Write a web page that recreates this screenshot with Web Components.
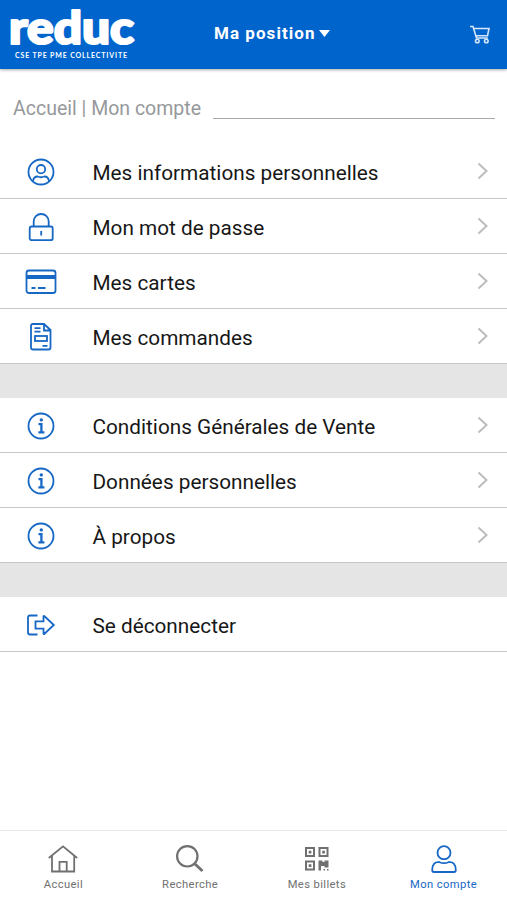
<!DOCTYPE html>
<html lang="fr"><head><meta charset="utf-8"><title>Mon compte</title>
<style>html,body{margin:0;height:100%;background:#fff}body{font-family:Roboto,sans-serif}</style></head>
<body><account-page></account-page>
<script>
const define=(name,html)=>customElements.define(name,class extends HTMLElement{
  connectedCallback(){if(!this.shadowRoot)this.attachShadow({mode:'open'}).innerHTML=typeof html==='function'?html(this):html}
});
const icons={
user:'<circle cx="16" cy="16" r="12.5"/><circle cx="16" cy="13.2" r="4.2"/><path d="M8 25.500Q8.500 20.500 12.500 20.500Q16 22 19.500 20.500Q23.500 20.500 24 25.500"/>',
lock:'<rect x="4.700" y="15.500" width="23" height="13.700" rx="2"/><path d="M8.700 15.500V10.500a7.500 7.500 0 0 1 15 0v5M16.200 20v4.500"/>',
card:'<rect x="1.500" y="4.500" width="29" height="22.500" rx="2.500"/><path d="M2 11h28" stroke-width="4"/><path d="M6.500 22h4M13 22h7.500"/>',
order:'<path d="M8 3h11l6.500 6v17.500q0 2-2 2H8q-2 0-2-2V5q0-2 2-2ZM19 3v6.500h6.500"/><path d="M9.500 7.200h6M9.500 10.600h6M17.500 24.800h5"/><rect x="10" y="15" width="12" height="5"/>',
info:'<circle cx="16" cy="16" r="12.500"/><circle cx="16.300" cy="9.900" r="1.700" fill="currentColor" stroke="none"/><path d="M13.500 14.200h2.900v8M13.400 22.300h6" stroke-width="2.300"/>',
exit:'<path d="M12.500 6.500H5q-2 0-2 2v15q0 2 2 2h7.500"/><path d="M10.500 12.300h8V7.500q0-1 1-.2l9.300 8.700-9.300 8.700q-1 .8-1-.2v-4.800h-8Z"/>',
home:'<path d="M1.800 15 16 3.300 30.200 15M5 12.700v15.800h22.200V12.700M12.500 28.500V18.800h7.200v9.700"/>',
search:'<circle cx="13.300" cy="13.300" r="10.200" stroke-width="2.200"/><path d="m20.700 20.700 7.800 7.300" stroke-width="2.800"/>',
qr:'<path d="M5 5h8v8H5zM18.500 5h8v8h-8zM5 18.500h8v8H5z" stroke-width="2"/><path d="M7.700 7.700h2.700v2.700H7.700zM21.200 7.700h2.700v2.700h-2.700zM7.700 21.200h2.700v2.700H7.700zM17.500 17.500h4v1.500h2v-1.500h4v7h-4V23H20v4.500h-2.500zM22.500 26h1.500v1.500h-1.500zM26 26h1.500v1.500H26z" fill="currentColor" stroke="none"/>',
person:'<circle cx="16" cy="9.700" r="6.500"/><path d="M11.500 19.200Q16 21.200 20.500 19.200Q27.500 18 27.800 27q0 2-1.800 2H6q-1.800 0-1.800-2Q4.500 18 11.500 19.200Z"/>'
};
define('line-icon',e=>`<style>:host{display:block;width:32px;height:32px;flex:none}svg{display:block;width:100%;height:100%}</style><svg viewBox="0 0 32 32" fill="none" stroke="currentColor" stroke-width="1.800">${icons[e.getAttribute('name')]}</svg>`);
define('brand-logo',`<style>:host{display:flex;flex-direction:column;width:130px;height:61px;color:#fff}svg{display:block;flex:none;overflow:visible}.name{font:900 45px Lato,sans-serif}.sub{font:700 7px Lato,sans-serif}</style>
<svg width="130" height="49"><text class="name" fill="#fff" stroke="#fff" stroke-width="2.200" stroke-linejoin="round" x="0" y="43.800" textLength="125" lengthAdjust="spacingAndGlyphs">reduc</text></svg>
<svg width="130" height="10"><text class="sub" fill="#fff" x="6" y="8.500" textLength="112">CSE TPE PME COLLECTIVITE</text></svg>`);
define('app-header',`<style>:host{display:grid;grid-template-columns:205px auto 1fr;height:69px;box-sizing:border-box;padding:0 16px 0 9px;background:#0064cd;color:#fff;box-shadow:0 1px 3px #0005;flex:none;position:relative}
.place{display:flex;align-items:center;gap:3px;height:50px;margin-top:8px;font:700 17px/20px Roboto,sans-serif;letter-spacing:1.050px}
.place svg{margin-top:1px}.cart{justify-self:end;margin-top:23px;color:#d5e6fa}</style>
<brand-logo></brand-logo><div class="place"><span>Ma position</span><svg width="11" height="7"><path d="M0 0h11L5.500 7z" fill="#fff"/></svg></div>
<svg class="cart" width="22" height="22" fill="none" stroke="currentColor" stroke-width="1.600"><path d="M1 3.500h3l3.500 11.500h11.300M5 5.500h15l-1.500 7.300H7"/><circle cx="8.300" cy="18" r="1.800"/><circle cx="17.300" cy="18" r="1.800"/></svg>`);
define('bread-crumb',`<style>:host{display:flex;height:74.500px;box-sizing:border-box;padding:0 12px 0 13px;gap:12px;color:#96989b;font:400 19.500px/24px Roboto,sans-serif;flex:none}span{margin-top:28px;white-space:nowrap}i{flex:1;height:49px;border-bottom:1px solid #a7a9ad}</style><span><slot></slot></span><i></i>`);
define('menu-row',e=>`<style>:host{display:flex;align-items:center;height:55px;box-sizing:border-box;border-bottom:1px solid #c8c8c8;padding:2px 18px 0 24.500px;color:#171717;font:400 20.750px/26px Roboto,sans-serif;flex:none}line-icon{color:#1768c5;margin-right:36px}span{flex:1;white-space:nowrap;padding-top:2px}svg{display:block;margin-top:-1px}</style><line-icon name="${e.getAttribute('icon')}"></line-icon><span><slot></slot></span>${e.hasAttribute('plain')?'':'<svg width="13" height="18" fill="none" stroke="#bdbdbd" stroke-width="2"><path d="m2.500 1.500 8 7.500-8 7.500"/></svg>'}`);
define('menu-group',`<style>:host{display:flex;flex-direction:column}:host([separated])::before{content:"";height:34.300px;background:#e5e5e5}</style><slot></slot>`);
define('tab-item',e=>`<style>:host{flex:1;display:flex;flex-direction:column;align-items:center;padding-top:12px;color:#707070;font:400 11.200px/14px Roboto,sans-serif;letter-spacing:.4px}:host([active]){color:#1768c5}span{margin-top:3px}</style><line-icon name="${e.getAttribute('icon')}"></line-icon><span><slot></slot></span>`);
define('tab-bar',`<style>:host{display:flex;height:70px;box-sizing:border-box;border-top:1px solid #e8e8e8;margin-top:auto;flex:none}</style><slot></slot>`);
define('account-page',`<style>:host{display:flex;flex-direction:column;height:900px;overflow:hidden;background:#fff}</style>
<app-header></app-header><bread-crumb>Accueil | Mon compte</bread-crumb>
<menu-group><menu-row icon="user">Mes informations personnelles</menu-row><menu-row icon="lock">Mon mot de passe</menu-row><menu-row icon="card">Mes cartes</menu-row><menu-row icon="order">Mes commandes</menu-row></menu-group>
<menu-group separated><menu-row icon="info">Conditions Générales de Vente</menu-row><menu-row icon="info">Données personnelles</menu-row><menu-row icon="info">À propos</menu-row></menu-group>
<menu-group separated><menu-row icon="exit" plain>Se déconnecter</menu-row></menu-group>
<tab-bar><tab-item icon="home">Accueil</tab-item><tab-item icon="search">Recherche</tab-item><tab-item icon="qr">Mes billets</tab-item><tab-item icon="person" active>Mon compte</tab-item></tab-bar>`);
</script></body></html>
